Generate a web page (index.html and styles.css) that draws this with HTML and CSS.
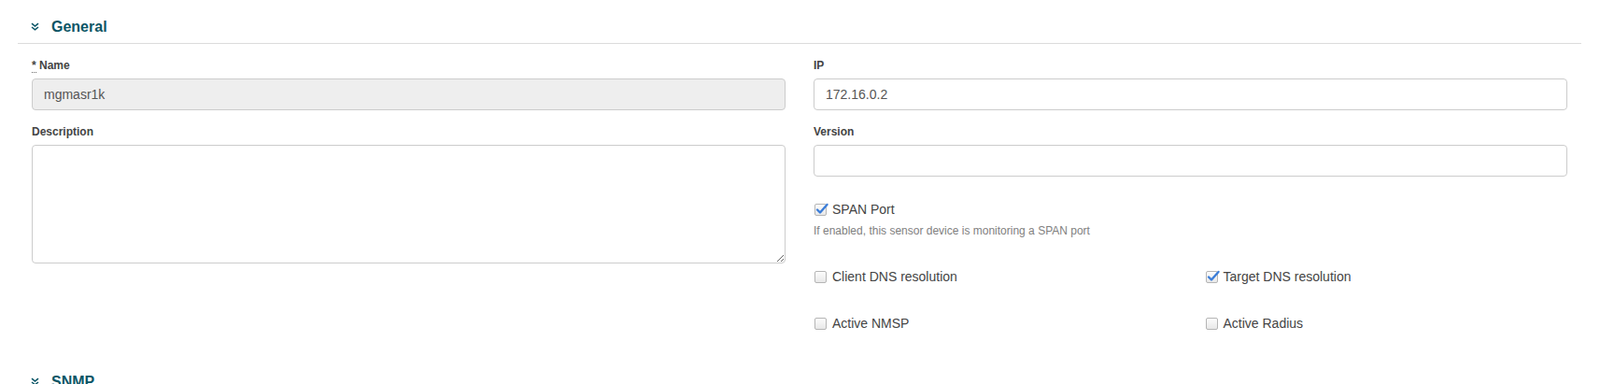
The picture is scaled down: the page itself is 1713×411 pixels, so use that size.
FILE: index.html
```html
<!DOCTYPE html>
<html>
<head>
<meta charset="utf-8">
<link rel="stylesheet" href="styles.css">
</head>
<body>
<div class="page">
  <section class="section">
    <h4 class="section-title">
      <svg class="chev" width="9" height="9" viewBox="0 0 9 9"><path d="M1 1.2 L4.5 4 L8 1.2 M1 5 L4.5 7.8 L8 5" fill="none" stroke="#0b5566" stroke-width="1.6"/></svg>
      <span>General</span>
    </h4>
    <div class="section-body">
      <div class="row">
        <div class="col">
          <div class="form-group">
            <label class="ctrl-label"><abbr class="req" title="required">*</abbr> Name</label>
            <input class="input" type="text" value="mgmasr1k" readonly>
          </div>
          <div class="form-group">
            <label class="ctrl-label">Description</label>
            <textarea class="input textarea"></textarea>
          </div>
        </div>
        <div class="col">
          <div class="form-group">
            <label class="ctrl-label">IP</label>
            <input class="input input-white" type="text" value="172.16.0.2">
          </div>
          <div class="form-group">
            <label class="ctrl-label">Version</label>
            <input class="input input-white" type="text" value="">
          </div>
          <div class="check-group">
            <div class="check">
              <span class="box checked"><svg width="16" height="16" viewBox="0 0 16 16"><path d="M3 8.5 L6 11.5 L13.5 3" fill="none" stroke="#3b7dd8" stroke-width="2.4" stroke-linecap="round" stroke-linejoin="round"/></svg></span>
              <span class="check-text">SPAN Port</span>
            </div>
            <p class="help">If enabled, this sensor device is monitoring a SPAN port</p>
          </div>
          <div class="check-row">
            <div class="check-col">
              <div class="check">
                <span class="box"></span>
                <span class="check-text">Client DNS resolution</span>
              </div>
            </div>
            <div class="check-col">
              <div class="check">
                <span class="box checked"><svg width="16" height="16" viewBox="0 0 16 16"><path d="M3 8.5 L6 11.5 L13.5 3" fill="none" stroke="#3b7dd8" stroke-width="2.4" stroke-linecap="round" stroke-linejoin="round"/></svg></span>
                <span class="check-text">Target DNS resolution</span>
              </div>
            </div>
          </div>
          <div class="check-row">
            <div class="check-col">
              <div class="check">
                <span class="box"></span>
                <span class="check-text">Active NMSP</span>
              </div>
            </div>
            <div class="check-col">
              <div class="check">
                <span class="box"></span>
                <span class="check-text">Active Radius</span>
              </div>
            </div>
          </div>
        </div>
      </div>
    </div>
  </section>
  <section class="section">
    <h4 class="section-title">
      <svg class="chev" width="9" height="9" viewBox="0 0 9 9"><path d="M1 1.2 L4.5 4 L8 1.2 M1 5 L4.5 7.8 L8 5" fill="none" stroke="#0b5566" stroke-width="1.6"/></svg>
      <span>SNMP</span>
    </h4>
  </section>
</div>
</body>
</html>
```
FILE: styles.css
```css
html, body {
  margin: 0;
  padding: 0;
  background: #fff;
}
body {
  font-family: "Liberation Sans", Arial, sans-serif;
  color: #333;
  overflow: hidden;
}
.page {
  padding: 0 20px 0 19px;
}
.section {
  padding-bottom: 24px;
}
.section-title {
  margin: 0;
  padding: 19px 0 7px 14px;
  border-bottom: 1px solid #dcdcdc;
  display: flex;
  align-items: center;
  gap: 13px;
  font-size: 16px;
  line-height: 20px;
  font-weight: bold;
  color: #0b5566;
}
.chev {
  display: block;
  margin-top: -1px;
}
.section-body {
  padding-top: 15px;
}
.row {
  display: grid;
  grid-template-columns: 1fr 1fr;
}
.col {
  padding: 0 15px;
  min-width: 0;
}
.form-group {
  margin-bottom: 15px;
}
.ctrl-label {
  display: block;
  font-size: 12px;
  line-height: 17px;
  font-weight: bold;
  color: #444;
  margin-bottom: 5px;
}
.req {
  text-decoration: none;
  border-bottom: 1px dotted #666;
}
.input {
  display: block;
  box-sizing: border-box;
  width: 100%;
  height: 34px;
  padding: 6px 12px;
  font-family: "Liberation Sans", Arial, sans-serif;
  font-size: 14px;
  line-height: 20px;
  color: #555;
  background: #eee;
  border: 1px solid #ccc;
  border-radius: 4px;
  outline: none;
  margin: 0;
}
.input-white {
  background: #fff;
}
.textarea {
  height: 127px;
  background: #fff;
  resize: vertical;
}
.check-group {
  padding-top: 10px;
  margin-bottom: 30px;
}
.check {
  display: flex;
  align-items: center;
  height: 20px;
  font-size: 14px;
  line-height: 20px;
  color: #444;
}
.box {
  position: relative;
  box-sizing: border-box;
  width: 13px;
  height: 13px;
  margin: 0 6px 0 1px;
  border: 1px solid #b5b5b5;
  border-radius: 2px;
  background: linear-gradient(#fcfcfc, #e8e8e8);
  flex: none;
}
.box svg {
  position: absolute;
  left: -1px;
  top: -3px;
}
.help {
  margin: 5px 0 0;
  font-size: 12px;
  line-height: 17px;
  color: #808080;
}
.check-row {
  display: grid;
  grid-template-columns: 1fr 1fr;
  margin: 0 -15px 30px;
}
.check-row:last-child {
  margin-bottom: 0;
}
.check-col {
  padding: 0 15px;
}
```
